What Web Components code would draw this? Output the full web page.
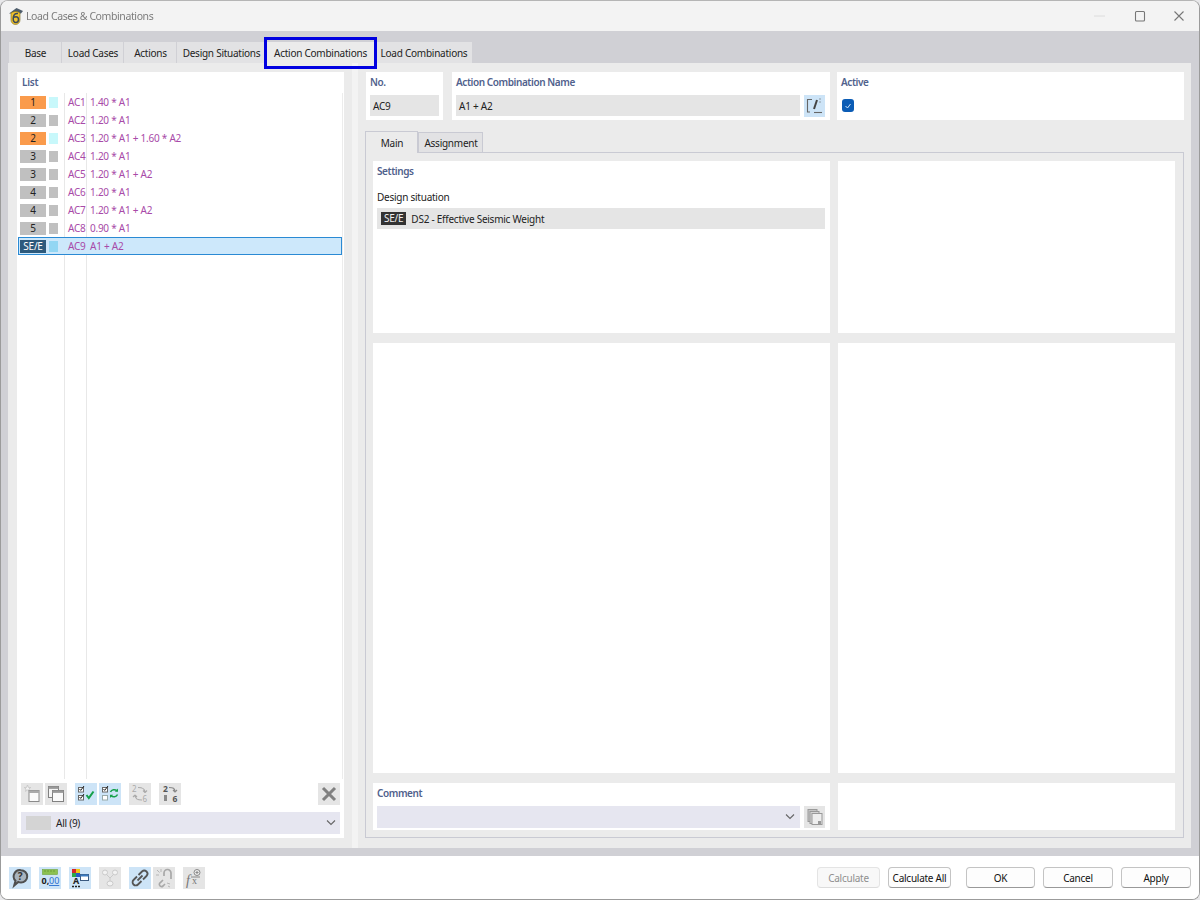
<!DOCTYPE html>
<html><head><meta charset="utf-8"><title>Load Cases & Combinations</title>
<style>
html,body{margin:0;padding:0;height:900px;background:#e8e8ea;overflow:hidden}
body{font:10px/14px "Noto Sans",sans-serif;color:#222}
</style></head><body>
<app-window>
  <title-bar slot="title">Load Cases &amp; Combinations</title-bar>
  <tab-strip slot="tabs"></tab-strip>
  <list-panel slot="list"></list-panel>
  <detail-panel slot="detail"></detail-panel>
  <dialog-footer slot="footer"></dialog-footer>
</app-window>
<script>
const FONT='"Noto Sans",sans-serif';
const TXT=`font:10px/14px ${FONT};letter-spacing:-.25px`;
const def=(n,html)=>customElements.define(n,class extends HTMLElement{
  connectedCallback(){ if(this.shadowRoot) return; const r=this.attachShadow({mode:'open'}); r.innerHTML=html(this); }
});
const I={
 star:`<path d="M6.500 2l.9 2.400 2.400.1-1.900 1.500.7 2.400-2.100-1.400-2.100 1.400.7-2.400L3.200 4.500l2.400-.1z" fill="#f2f2f2" stroke="#c4c4c4" stroke-width=".8"/><rect x="8" y="7.500" width="10" height="11" fill="#fafafa" stroke="#8a8a8a"/><rect x="8" y="7.500" width="10" height="2.500" fill="#aaa"/>`,
 copy:`<rect x="3.500" y="3.500" width="10" height="11" fill="#f5f5f5" stroke="#808080"/><rect x="3.500" y="3.500" width="10" height="2.400" fill="#999"/><rect x="7.500" y="7.500" width="11" height="11" fill="#fafafa" stroke="#808080"/><rect x="7.500" y="7.500" width="11" height="2.400" fill="#999"/>`,
 checks:`<rect x="3.500" y="4.500" width="5" height="4.500" fill="#fff" stroke="#666"/><path d="M4.500 6l1.200 1.400 3.300-4.400" fill="none" stroke="#222" stroke-width="1"/><rect x="3.500" y="12.500" width="5" height="4.500" fill="#fff" stroke="#666"/><path d="M4.500 14l1.200 1.400 3.300-4.400" fill="none" stroke="#222" stroke-width="1"/><path d="M11.500 12l2.300 3 4.700-6.500" fill="none" stroke="#15a04a" stroke-width="2"/>`,
 sync:`<rect x="3.500" y="4.500" width="5" height="4.500" fill="#fff" stroke="#666"/><path d="M4.500 6l1.200 1.400 3.300-4.400" fill="none" stroke="#222" stroke-width="1"/><rect x="3.500" y="12.500" width="5" height="4.500" fill="#fff" stroke="#9aa"/><path d="M11.500 9c1-2.500 4.500-3 6.500-1.300M18.500 11.500c-1 2.500-4.500 3-6.500 1.300" fill="none" stroke="#15a04a" stroke-width="1.500"/><path d="M19 5.500v3.200h-3.200zM11 15v-3.200h3.200z" fill="#15a04a"/>`,
 renum:`<text x="3" y="9" font-size="8" fill="#aaa" font-family="${FONT}">2</text><text x="13.500" y="19" font-size="8" fill="#aaa" font-family="${FONT}">6</text><path d="M9 4.500c4 0 7 .5 7 5M16 9.500l-2-2M16 9.500l2-2M13 17c-4 0-7-.5-7-5M6 12l-2 2M6 12l2 2" fill="none" stroke="#aaa" stroke-width="1.100"/>`,
 sort:`<text x="4" y="9" font-size="8.500" font-weight="700" fill="#555" font-family="${FONT}">2</text><text x="13.500" y="19" font-size="8.500" font-weight="700" fill="#555" font-family="${FONT}">6</text><path d="M10 4.500c4 0 6 .5 6 4.500M16 9l-2-2M16 9l2-2" fill="none" stroke="#888" stroke-width="1.100"/><path d="M5 12h3v6H5z" fill="#888"/>`,
 x:`<path d="M5 5l12 12M17 5L5 17" stroke="#808080" stroke-width="3" fill="none"/>`,
 help:`<path d="M12 3.200a6.200 6.200 0 0 1 0 12.400c-1.100 0-2-.3-2.800-.7L5.200 18.500l1.300-4.800A6.200 6.200 0 0 1 12 3.200z" fill="#a9b4be" stroke="#4f4f4f" stroke-width="2"/><text x="8.800" y="13.300" font-size="10" font-weight="700" fill="#333" font-family="${FONT}">?</text>`,
 num:`<rect x="3.500" y="2.500" width="15" height="5" fill="#8cc152" stroke="#6fa53c" stroke-width=".6"/><path d="M6 3v2M9 3v2M12 3v2M15 3v2" stroke="#5d8f2f" stroke-width=".7"/><text x="2.500" y="17" font-size="9" font-weight="700" fill="#222" font-family="${FONT}">0,</text><text x="10" y="17" font-size="9" fill="#2a6fd0" font-family="${FONT}" text-decoration="underline">00</text>`,
 color:`<rect x="3" y="2" width="4" height="4" fill="#d8252a"/><rect x="7" y="2" width="4" height="4" fill="#f2c511"/><rect x="3" y="6" width="4" height="4" fill="#2aa84a"/><rect x="7" y="6" width="4" height="4" fill="#2b58c8"/><text x="4" y="17" font-size="9" font-weight="700" fill="#222" font-family="${FONT}">A</text><path d="M3 19.500h9" stroke="#222" stroke-dasharray="2 1" stroke-width="1.500"/><rect x="11.500" y="7.500" width="8" height="6" fill="#fff" stroke="#3a5a80"/><rect x="11.500" y="7.500" width="8" height="2" fill="#3a7ac0"/>`,
 tree:`<g fill="#f2f2f2" stroke="#cacaca"><circle cx="6" cy="5.500" r="2.500"/><circle cx="16" cy="5.500" r="2.500"/><ellipse cx="11" cy="16.500" rx="3" ry="2.500"/></g><path d="M7.500 7.500L11 11l3.500-3.500M11 11v3" stroke="#cacaca" fill="none"/>`,
 link:`<g fill="none" stroke="#555" stroke-width="1.800"><path d="M9.500 8L13 4.500a3 3 0 0 1 4.500 4.500L14 12.500"/><path d="M12.500 14L9 17.500A3 3 0 0 1 4.500 13L8 9.500"/><path d="M8.500 13.500l5-5"/></g>`,
 unlink:`<g fill="none" stroke="#a8a8a8" stroke-width="1.700"><path d="M11 9V6a3.500 3.500 0 0 1 7 0v6"/><path d="M10 13l-3.500 3.500a2.200 2.200 0 0 0 3.500 2.500l2-2"/></g><path d="M4 3l2.500 2.500M3 8h3M8 2v3M14 16l3 1M15 19l2 1" stroke="#b5b5b5" fill="none"/>`,
 fx:`<text x="3" y="18" font-size="14" font-style="italic" fill="#777" font-family="'Liberation Serif',serif">f</text><text x="9" y="17" font-size="10" fill="#777" font-family="'Liberation Serif',serif">x</text><circle cx="14" cy="5.500" r="3" fill="#eee" stroke="#888"/><path d="M14 4v3M12.500 5.500h3M8 10h9" stroke="#888" fill="none"/>`,
 edit:`<path d="M8 4.500H3.500v12.500H6" fill="none" stroke="#666" stroke-width="1.100"/><path d="M13 5l-3 9" stroke="#444" stroke-width="2"/><path d="M15.500 4h1M15.500 7h1" stroke="#555"/><path d="M10 17.500h8" stroke="#666" stroke-width="1.100"/>`,
 lib:`<rect x="4" y="3.500" width="9" height="12" fill="#c4c4c4" stroke="#999"/><rect x="6" y="5.500" width="9" height="12" fill="#d4d4d4" stroke="#999"/><rect x="8" y="7.500" width="10" height="11" fill="#eee" stroke="#999"/><rect x="14" y="15" width="3" height="3" fill="#999"/>`
};
def('icon-btn',h=>`<style>:host{display:block;width:22px;height:22px;background:${h.hasAttribute('on')?'#cde4f7':'#e5e5e5'};flex:none}svg{display:block}</style><svg width="22" height="22" viewBox="0 0 22 22">${I[h.getAttribute('i')]}</svg>`);

def('app-window',()=>`<style>
:host{display:flex;flex-direction:column;box-sizing:border-box;width:1200px;height:900px;background:#fff;border:1px solid #9b9b9b;border-top-color:#b5b5b5;border-radius:8px;overflow:hidden;filter:blur(.3px)}
.main{flex:1;min-height:0;display:flex;flex-direction:column;background:#d0d0d5;padding:11px 8px 8px 7px}
.page{flex:1;min-height:0;background:#ebebeb;display:flex;padding:9px 7px 10px 9px}
.split{flex:none;width:6px;margin:-9px 8px -10px;background:#f3f3f3}
</style><slot name="title"></slot><div class="main"><slot name="tabs"></slot><div class="page"><slot name="list"></slot><div class="split"></div><slot name="detail"></slot></div></div><slot name="footer"></slot>`);

def('title-bar',()=>`<style>
:host{display:flex;align-items:center;height:30px;box-sizing:border-box;padding:0 0 0 6px;background:#f3f3f3;color:#7c7c7c;font:10.500px/16px ${FONT};flex:none;letter-spacing:-.4px}
svg{display:block;flex:none}.t{margin-left:1px;flex:1}
.c{display:flex;align-items:center}.c span{width:40px;display:flex;justify-content:center}
</style><svg width="18" height="20" viewBox="0 0 18 20"><path d="M2 7.500L9.500 2 16 5l-2 2.500z" fill="#4e5d6b"/><path d="M4 7c3-2 7-2 9 0v7a4.500 4.500 0 0 1-9 0z" fill="#f3c32c" stroke="#7a6a20" stroke-width=".6"/><path d="M11 7.500C8 7 6.200 9 6.200 12.500c0 2.800 1 4 2.600 4s2.700-1.300 2.700-3-1-2.800-2.500-2.800c-1 0-1.500.5-1.700 1" fill="none" stroke="#3c4a58" stroke-width="1.500"/></svg><span class="t"><slot></slot></span>
<div class="c"><span><svg width="14" height="10"><path d="M1 5h11" stroke="#dcdcdc"/></svg></span><span><svg width="12" height="12"><rect x="1.500" y="1.500" width="9" height="9.500" rx="1" fill="none" stroke="#777" stroke-width="1.100"/></svg></span><span style="margin-left:-1px"><svg width="12" height="12"><path d="M1.500 1.500l9 9M10.500 1.500l-9 9" stroke="#777" stroke-width="1.100"/></svg></span></div>`);

def('tab-strip',()=>{const tabs=[['Base',52],['Load Cases',61],['Actions',52],['Design Situations',88],['Action Combinations',108,1],['Load Combinations',97]];
 return `<style>
:host{display:flex;flex:none;height:21px;gap:1px;padding-left:1px;${TXT};color:#222}
.t{box-sizing:border-box;height:21px;padding:1px 0 0 1px;background:#e2e2e4;display:flex;align-items:center;justify-content:center;white-space:nowrap;flex:none}
.a{background:#ebebeb;position:relative;z-index:1}
.a::after{content:"";position:absolute;top:-5px;bottom:-6px;left:-2px;right:-3px;border:3px solid #0000e0;pointer-events:none}
</style>`+tabs.map(t=>`<div class="t${t[2]?' a':''}" style="width:${t[1]}px">${t[0]}</div>`).join('')});

def('group-card',()=>`<style>
:host{display:flex;flex-direction:column;box-sizing:border-box;background:#fff;padding:3px 4px 4px;min-width:0;${TXT}}
.h{color:#50618c;font-weight:600;height:14px;white-space:nowrap;letter-spacing:-.42px}
.b{flex:1;min-height:0;display:flex;flex-direction:column}
</style><div class="h"><slot name="h"></slot></div><div class="b"><slot></slot></div>`);

def('list-row',h=>{const k=h.getAttribute('k'),c=h.getAttribute('c'),s=h.hasAttribute('sel');
 const bg=s?'#2d5a7c':k==='o'?'#fa9b4c':'#c0c0c0', sw=s?'#92d6f3':k==='o'?'#c8f8fb':'#c0c0c0';
 return `<style>
:host{display:flex;align-items:center;box-sizing:border-box;height:18px;${TXT};color:#a84aa8;${s?'background:#cde8fb;box-shadow:inset 0 0 0 1px #2a8ad4;':''}}
.b{width:26px;height:13px;margin-left:2px;background:${bg};color:${s?'#fff':'#222'};text-align:center;line-height:13px;flex:none}
.s{width:9px;height:11px;margin-left:3px;background:${sw};flex:none}
.i{width:18px;margin-left:10px;flex:none}.f{margin-left:4px;white-space:nowrap}
</style><div class="b">${h.getAttribute('n')}</div><div class="s"></div><div class="i">${h.getAttribute('id')}</div><div class="f">${c}</div>`});

def('list-panel',()=>`<style>
:host{display:flex;flex-direction:column;flex:none;width:327px;box-sizing:border-box;background:#fff;${TXT}}
.h{color:#50618c;font-weight:600;padding:3px 0 0 5px;height:21px;box-sizing:border-box;flex:none}
.l{flex:1;min-height:0;margin:0 1px;border-right:1px solid #ececec;display:flex;flex-direction:column;
 background:linear-gradient(#e8e8e8,#e8e8e8) 46px 0/1px 100% no-repeat,linear-gradient(#e8e8e8,#e8e8e8) 68px 0/1px 100% no-repeat}
.tb{display:flex;padding:0 4px;height:22px;margin-top:4px;flex:none}
.sp{flex:1}
.dd{display:flex;align-items:center;height:22px;margin:7px 4px 4px;background:#e6e6f0;flex:none}
.sw{width:25px;height:14px;background:#d4d4d4;margin-left:5px}.dd span{margin-left:5px;flex:1}
svg{display:block;margin-right:3px}
</style><div class="h">List</div><div class="l">
<list-row n="1" k="o" id="AC1" c="1.40 * A1"></list-row>
<list-row n="2" id="AC2" c="1.20 * A1"></list-row>
<list-row n="2" k="o" id="AC3" c="1.20 * A1 + 1.60 * A2"></list-row>
<list-row n="3" id="AC4" c="1.20 * A1"></list-row>
<list-row n="3" id="AC5" c="1.20 * A1 + A2"></list-row>
<list-row n="4" id="AC6" c="1.20 * A1"></list-row>
<list-row n="4" id="AC7" c="1.20 * A1 + A2"></list-row>
<list-row n="5" id="AC8" c="0.90 * A1"></list-row>
<list-row n="SE/E" sel id="AC9" c="A1 + A2"></list-row>
</div><div class="tb">
<icon-btn i="star"></icon-btn><icon-btn i="copy" style="margin-left:2px"></icon-btn><icon-btn i="checks" on style="margin-left:8px"></icon-btn><icon-btn i="sync" on style="margin-left:2px"></icon-btn><icon-btn i="renum" style="margin-left:8px"></icon-btn><icon-btn i="sort" style="margin-left:8px"></icon-btn><div class="sp"></div><icon-btn i="x"></icon-btn>
</div><div class="dd"><div class="sw"></div><span>All (9)</span><svg width="12" height="8"><path d="M2 1.500l4 4 4-4" fill="none" stroke="#666" stroke-width="1.100"/></svg></div>`);

def('detail-panel',()=>`<style>
:host{display:flex;flex-direction:column;flex:1;min-width:0;${TXT}}
.top{display:grid;grid-template-columns:77px 378px 1fr;gap:9px 8px;height:48px;flex:none}
.top group-card:nth-child(2){margin-left:1px;margin-right:-1px}
.top group-card{overflow:hidden}
.f{height:21px;background:#e5e5e5;display:flex;align-items:center;padding-left:3px;margin-top:6px;white-space:nowrap}
.row{display:flex;gap:4px}.row .f{flex:1}.row icon-btn{margin-top:6px;margin-right:1px;width:21px}
.cb{width:12px;height:13px;border-radius:3px;background:#0b5cb5;margin:10px 0 0 1px;display:flex;align-items:center;justify-content:center}
.st{display:flex;flex:none;height:21px;margin-top:11px;align-items:flex-end}
.st div{box-sizing:border-box;display:flex;align-items:center;justify-content:center;padding-left:1px}
.m{width:53px;height:22px;background:#ebebeb;border:1px solid #c9cad3;border-bottom:0;position:relative;top:1px;z-index:1;margin-left:-1px}
.as{width:65px;height:20px;background:#e2e2e4;border:1px solid #c9cad3;border-bottom:0}
.box{flex:1;min-height:0;border:1px solid #c9cad3;padding:8px 7px 7px;display:grid;grid-template-columns:457px 337px;grid-template-rows:172px 1fr 47px;gap:10px 8px;box-sizing:border-box;background:#ebebeb;margin-left:-1px}
.box>.w{background:#fff}
.lab{margin-top:12px;margin-bottom:4px;height:14px;color:#222}
.ds{height:21px;background:#e5e5e5;margin-right:1px;display:flex;align-items:center;padding-left:4px}
.tag{background:#333;color:#f0f0f0;padding:0 3px;height:13px;line-height:13px;margin-right:5px}
.cm{display:flex;gap:4px;margin-top:6px;margin-right:1px}
.dd{flex:1;height:22px;background:#e6e6f0;display:flex;justify-content:flex-end;align-items:center}
.dd svg{margin-right:4px}
</style><div class="top">
<group-card><span slot="h">No.</span><div class="f">AC9</div></group-card>
<group-card><span slot="h">Action Combination Name</span><div class="row"><div class="f">A1 + A2</div><icon-btn i="edit" on></icon-btn></div></group-card>
<group-card><span slot="h">Active</span><div class="cb"><svg width="8" height="8"><path d="M1.500 4l2 2 3-4" fill="none" stroke="#cfe4fa" stroke-width="1"/></svg></div></group-card>
</div>
<div class="st"><div class="m">Main</div><div class="as">Assignment</div></div>
<div class="box">
<group-card><span slot="h">Settings</span><div class="lab">Design situation</div><div class="ds"><span class="tag">SE/E</span>DS2 - Effective Seismic Weight</div></group-card>
<div class="w"></div><div class="w"></div><div class="w"></div>
<group-card><span slot="h">Comment</span><div class="cm"><div class="dd"><svg width="12" height="8"><path d="M2 1.500l4 4 4-4" fill="none" stroke="#666" stroke-width="1.100"/></svg></div><icon-btn i="lib" style="width:21px"></icon-btn></div></group-card>
<div class="w"></div>
</div>`);

def('push-btn',h=>{const d=h.hasAttribute('off');return `<style>
:host{display:flex;align-items:center;justify-content:center;box-sizing:border-box;height:21px;border:1px solid ${d?'#e4e4e4':'#c4c4c4'};border-bottom-color:${d?'#dcdcdc':'#999'};border-radius:4px;background:${d?'#f8f8f8':'#fdfdfd'};color:${d?'#8f8f8f':'#111'};${TXT};flex:none;white-space:nowrap}
</style><slot></slot>`});

def('dialog-footer',()=>`<style>
:host{display:flex;align-items:flex-start;height:43px;box-sizing:border-box;background:#fff;padding:11px 8px 0 8px;flex:none}
.sp{flex:1}
</style>
<icon-btn i="help" on></icon-btn><icon-btn i="num" on style="margin-left:8px"></icon-btn><icon-btn i="color" on style="margin-left:8px"></icon-btn><icon-btn i="tree" style="margin-left:8px"></icon-btn><icon-btn i="link" on style="margin-left:8px"></icon-btn><icon-btn i="unlink" style="margin-left:2px"></icon-btn><icon-btn i="fx" style="margin-left:8px"></icon-btn>
<div class="sp"></div>
<push-btn off style="width:63px">Calculate</push-btn><push-btn style="width:63px;margin-left:8px">Calculate All</push-btn><push-btn style="width:69px;margin-left:15px">OK</push-btn><push-btn style="width:70px;margin-left:8px">Cancel</push-btn><push-btn style="width:70px;margin-left:8px">Apply</push-btn>`);
</script></body></html>
